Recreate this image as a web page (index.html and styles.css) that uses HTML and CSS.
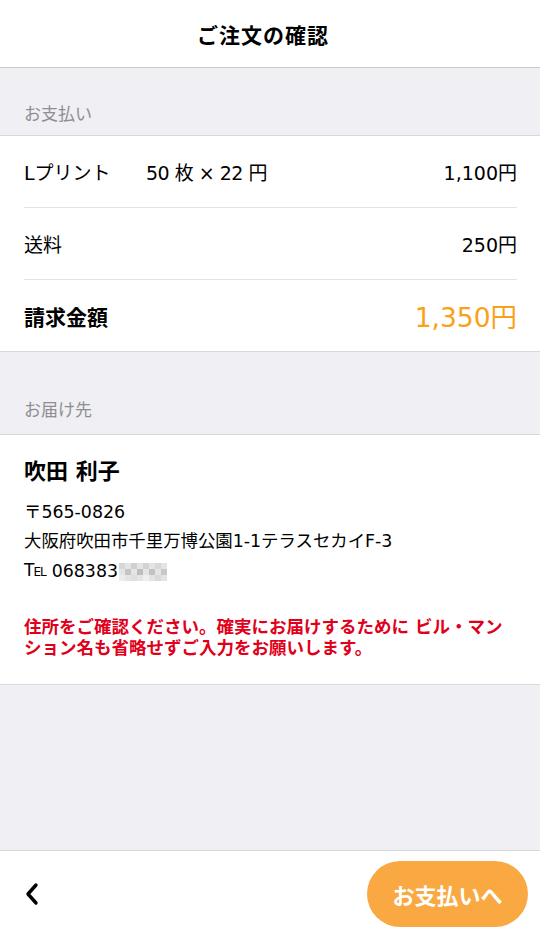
FILE: index.html
```html
<!DOCTYPE html>
<html lang="ja">
<head>
<meta charset="utf-8">
<title>ご注文の確認</title>
<link rel="stylesheet" href="styles.css">
</head>
<body>
<div class="app">
  <header class="topbar">
    <h1 class="title">ご注文の確認</h1>
  </header>

  <div class="section-label first">お支払い</div>
  <section class="card">
    <div class="row">
      <div class="item"><span class="item-name">Lプリント</span><span class="item-qty">50 枚 × 22 円</span></div>
      <div class="amount">1,100円</div>
    </div>
    <div class="row">
      <div class="item">送料</div>
      <div class="amount">250円</div>
    </div>
    <div class="row total">
      <div class="item">請求金額</div>
      <div class="amount">1,350円</div>
    </div>
  </section>

  <div class="section-label second">お届け先</div>
  <section class="card address">
    <div class="name">吹田 利子</div>
    <div class="addr-lines">
      <div>〒565-0826</div>
      <div>大阪府吹田市千里万博公園1-1テラスセカイF-3</div>
      <div class="tel"><span class="tel-mark">T<small>EL</small></span> 068383<svg class="mosaic" width="48" height="18" viewBox="0 0 48 18"><rect x="0" y="0" width="48" height="18" fill="#e4e4e4"/><rect x="0" y="0" width="6" height="6" fill="#d6d6d6"/><rect x="6" y="6" width="6" height="6" fill="#c4c4c4"/><rect x="12" y="0" width="6" height="6" fill="#cfcfcf"/><rect x="18" y="6" width="6" height="6" fill="#bdbdbd"/><rect x="24" y="0" width="6" height="6" fill="#d2d2d2"/><rect x="30" y="6" width="6" height="6" fill="#c2c2c2"/><rect x="36" y="0" width="6" height="6" fill="#d8d8d8"/><rect x="42" y="6" width="6" height="6" fill="#c8c8c8"/><rect x="0" y="12" width="6" height="6" fill="#ececec"/><rect x="12" y="12" width="6" height="6" fill="#dedede"/><rect x="24" y="12" width="6" height="6" fill="#efefef"/><rect x="36" y="12" width="6" height="6" fill="#dadada"/></svg></div>
    </div>
    <p class="warning">住所をご確認ください。確実にお届けするために ビル・マンション名も省略せずご入力をお願いします。</p>
  </section>

  <div class="filler"></div>

  <footer class="bottombar">
    <button class="back" aria-label="戻る">
      <svg width="16" height="24" viewBox="0 0 16 24"><path d="M12 3 L4 12 L12 21" fill="none" stroke="#000" stroke-width="3.4" stroke-linecap="round" stroke-linejoin="round"/></svg>
    </button>
    <button class="next">お支払いへ</button>
  </footer>
</div>
</body>
</html>
```

FILE: styles.css
```css
* { box-sizing: border-box; }
html, body {
  margin: 0;
  padding: 0;
}
body {
  font-family: "DejaVu Sans", "Noto Sans CJK JP", sans-serif;
  color: #000;
  background: #efeff4;
}
.app {
  width: 540px;
  height: 936px;
  display: flex;
  flex-direction: column;
}
.topbar {
  height: 68px;
  background: #fff;
  border-bottom: 1px solid #c8c7cc;
  display: flex;
  align-items: center;
  justify-content: center;
  padding-right: 14px;
}
.title {
  margin: 0;
  font-size: 21px;
  font-weight: 700;
  letter-spacing: 1px;
}
.section-label {
  background: #efeff4;
  color: #8e8e93;
  font-size: 17px;
  padding: 0 24px;
  display: flex;
  align-items: flex-end;
  border-bottom: 1px solid #d8d8dc;
}
.section-label.first {
  height: 68px;
  padding-bottom: 10px;
}
.section-label.second {
  height: 83px;
  padding-bottom: 13px;
}
.card {
  background: #fff;
  border-bottom: 1px solid #d8d8dc;
  padding: 0 23px 0 24px;
}
.row {
  height: 72px;
  display: flex;
  align-items: center;
  justify-content: space-between;
  border-bottom: 1px solid #e3e3e3;
  font-size: 19px;
}
.row.total {
  border-bottom: none;
  height: 71px;
}
.item-name {
  display: inline-block;
  width: 122px;
}
.item-qty {
  letter-spacing: -0.5px;
}
.row.total .item {
  font-size: 21px;
  font-weight: 700;
}
.row.total .amount {
  font-size: 26.5px;
  color: #f9a11b;
}
.address {
  height: 250px;
  padding-top: 22px;
}
.name {
  font-size: 22px;
  font-weight: 700;
  line-height: 30px;
}
.addr-lines {
  margin-top: 11px;
  font-size: 17.4px;
  line-height: 29px;
}
.tel {
  display: flex;
  align-items: center;
}
.tel-mark {
  font-size: 17px;
  margin-right: 6px;
  letter-spacing: -1px;
}
.tel-mark small {
  font-size: 12px;
}
.mosaic {
  display: block;
  margin-left: 1px;
}
.warning {
  margin: 30px 0 0;
  color: #e0001b;
  font-size: 17.5px;
  font-weight: 700;
  line-height: 21px;
  padding-right: 10px;
}
.filler {
  flex: 1;
  background: #efeff4;
}
.bottombar {
  height: 86px;
  background: #fff;
  border-top: 1px solid #d8d8dc;
  display: flex;
  align-items: center;
  justify-content: space-between;
  padding: 0 12px 0 24px;
}
.back {
  background: none;
  border: none;
  padding: 0;
  display: flex;
  align-items: center;
}
.next {
  width: 161px;
  height: 66px;
  border-radius: 33px;
  border: none;
  background: #f9a842;
  color: #fff;
  font-family: "Noto Sans CJK JP", sans-serif;
  font-size: 22px;
  font-weight: 700;
}
```
